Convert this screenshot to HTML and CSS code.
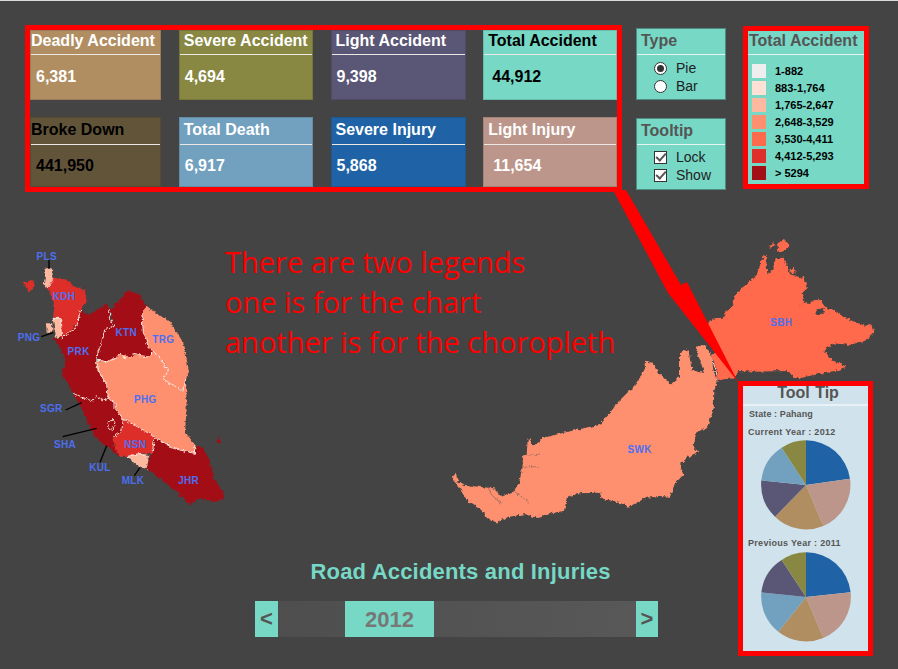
FILE: index.html
```html
<!DOCTYPE html>
<html lang="en">
<head>
<meta charset="utf-8">
<title>Road Accidents and Injuries</title>
<link rel="stylesheet" href="styles.css">
</head>
<body>
<main class="page">
  <svg class="map" viewBox="0 0 898 669" aria-label="Choropleth of Malaysia">
    <defs>
      <filter id="rough" filterUnits="userSpaceOnUse" x="0" y="0" width="1400" height="900">
        <feTurbulence type="fractalNoise" baseFrequency="0.09" numOctaves="3" seed="4" result="noise"/>
        <feDisplacementMap in="SourceGraphic" in2="noise" scale="14" xChannelSelector="R" yChannelSelector="G"/>
      </filter>
    </defs>
    <g transform="translate(0 235) scale(.33333)">
      <g filter="url(#rough)">
        <polygon class="c2" points="137,100 155,100 162,135 140,160 131,150 135,125"/>
        <polygon class="c5" points="68,140 85,142 100,135 104,155 85,170 78,155"/>
        <polygon class="c5" points="162,128 205,135 225,155 255,165 260,200 245,222 235,262 210,290 185,312 178,305 180,250 160,248 162,205 148,170 140,160"/>
        <polygon class="c2" points="158,250 182,250 184,305 168,308"/>
        <polygon class="c2" points="138,265 157,265 157,290 140,290"/>
        <polygon class="c6" points="160,308 185,312 210,290 235,262 242,225 265,240 320,205 330,225 328,245 342,275 315,280 305,325 288,370 290,400 320,450 325,490 300,482 285,495 255,490 220,475 195,430 185,425 195,380 185,345 165,315"/>
        <polygon class="c6" points="330,225 365,190 385,165 420,180 438,215 425,235 430,290 445,335 460,350 445,365 415,358 390,365 360,358 345,372 320,380 300,375 288,370 305,325 315,280 342,275"/>
        <polygon class="c3" points="425,235 438,215 470,235 510,262 545,315 560,370 567,410 558,430 552,470 520,450 490,435 505,405 485,370 460,350 445,335 430,290"/>
        <polygon class="c3" points="290,378 320,380 345,372 360,358 390,365 415,358 445,365 460,350 485,370 505,405 490,435 520,450 548,470 558,430 560,520 555,590 585,630 583,655 520,640 465,608 430,585 370,552 345,520 345,505 325,490 320,450 290,400"/>
        <polygon class="c6" points="220,475 255,490 285,495 300,482 325,490 345,505 345,520 370,552 365,590 340,605 345,640 360,665 330,640 300,620 275,590 250,530"/>
        <polygon class="c5" points="370,552 430,585 465,608 455,655 420,655 380,665 360,665 345,640 340,605 365,590"/>
        <polygon class="c2" points="380,665 420,655 448,660 440,703 410,690"/>
        <polygon class="c6" points="465,608 520,640 583,655 590,630 610,640 630,680 640,730 670,770 670,795 640,800 600,790 570,808 530,770 490,740 440,700 455,655"/>
        <polygon class="c6" points="650,620 655,600 663,620 655,625"/>
        <polyline class="edge" points="140,160 162,135"/>
        <polyline class="edge" points="185,312 210,290 222,285 235,262 237,240 242,225"/>
        <polyline class="edge" points="330,225 328,245 342,275 315,280 308,310 305,325 295,350 288,370"/>
        <polyline class="edge" points="288,375 320,380 345,372 350,362 360,358 375,368 390,365 400,355 415,358 430,368 445,365 460,350"/>
        <polyline class="edge" points="425,235 430,290 445,335 460,350 485,370 490,385 505,405 490,435 520,450 548,470 558,430"/>
        <polyline class="edge" points="290,378 295,405 320,450 325,490"/>
        <polyline class="edge" points="220,475 240,485 255,490 280,498 288,482 300,490 312,497 325,490 345,505 345,520 370,552 430,585 465,608 520,640 583,655 585,630"/>
        <polyline class="edge" points="370,552 365,590 340,605"/>
        <polyline class="edge" points="465,608 455,655"/>
        <polyline class="edge" points="158,250 182,250 184,305"/>
        <polyline class="edge" points="380,665 420,655 445,670"/>
        <polygon class="edge" points="325,560 340,555 345,570 335,585 323,575"/>
      </g>
      <polyline class="lead" points="147,75 147,102"/>
      <polyline class="lead" points="124,305 160,293"/>
      <polyline class="lead" points="197,525 245,503"/>
      <polyline class="lead" points="188,605 290,580"/>
      <polyline class="lead" points="300,682 320,632"/>
      <polyline class="lead" points="403,722 420,698"/>
      <text class="label" x="140" y="76">PLS</text>
      <text class="label" x="192" y="196">KDH</text>
      <text class="label" x="87" y="317">PNG</text>
      <text class="label" x="379" y="304">KTN</text>
      <text class="label" x="490" y="325">TRG</text>
      <text class="label" x="236" y="361">PRK</text>
      <text class="label" x="436" y="505">PHG</text>
      <text class="label" x="154" y="532">SGR</text>
      <text class="label" x="195" y="640">SHA</text>
      <text class="label" x="406" y="640">NSN</text>
      <text class="label" x="300" y="707">KUL</text>
      <text class="label" x="399" y="748">MLK</text>
      <text class="label" x="566" y="748">JHR</text>
    </g>
    <g transform="translate(445 340) scale(.33333)">
      <g filter="url(#rough)">
        <polygon class="c3" points="20,410 32,398 38,425 60,435 100,440 145,445 170,470 205,455 222,430 232,385 235,345 245,345 248,298 258,300 262,322 290,295 380,272 465,255 490,225 520,185 570,135 598,90 600,65 625,68 640,100 680,135 705,105 705,40 730,28 740,90 778,100 765,60 752,20 780,15 800,45 805,90 818,125 808,150 806,210 785,265 755,275 745,320 760,335 730,350 705,372 715,405 690,430 675,470 640,468 600,475 552,500 520,488 470,475 465,458 395,460 365,475 358,512 320,520 280,535 240,522 190,530 155,548 130,535 100,505 70,485 45,445"/>
        <polyline class="inlet" points="248,345 262,345 285,342"/>
        <polyline class="inlet" points="232,380 280,380"/>
        <polyline class="inlet" points="208,458 245,480 250,488"/>
        <polyline class="inlet" points="125,435 140,465 170,490"/>
        <polyline class="edge" points="805,45 803,65 818,100 815,122"/>
      </g>
      <text class="label" x="584" y="340">SWK</text>
    </g>
    <g transform="translate(690 235) scale(.33333)">
      <g filter="url(#rough)">
        <polygon class="c4" points="55,262 75,250 100,248 110,228 130,208 135,180 160,155 200,120 208,95 222,60 228,65 232,118 245,108 258,70 280,68 292,95 300,118 340,130 352,160 335,175 345,205 325,212 365,200 385,188 405,215 440,230 480,255 525,272 545,270 550,295 530,315 480,330 430,325 403,345 425,375 470,395 435,408 370,420 330,430 310,425 295,408 200,410 145,408 135,430 80,435 78,400 65,365 80,345 60,300"/>
        <polygon class="c4" points="238,35 250,22 255,30 240,38"/>
        <polygon class="c4" points="262,25 285,15 298,30 285,45 265,50"/>
        <polygon class="c4" points="298,105 312,98 320,110 305,115"/>
        <polygon class="gap" points="375,225 400,218 405,232 380,238"/>
      </g>
      <text class="label" x="274" y="272">SBH</text>
    </g>
    <polygon class="arrow" points="613,190 626,190 681,285 687,282 738,382 668,293"/>
  </svg>

  <section class="top">
    <div class="stats">
      <article class="tile tile-tan">
        <h2 class="tile-title pad-1">Deadly Accident</h2>
        <p class="tile-value">6,381</p>
      </article>
      <article class="tile tile-olive">
        <h2 class="tile-title pad-4">Severe Accident</h2>
        <p class="tile-value">4,694</p>
      </article>
      <article class="tile tile-purple">
        <h2 class="tile-title pad-4">Light Accident</h2>
        <p class="tile-value">9,398</p>
      </article>
      <article class="tile tile-teal">
        <h2 class="tile-title pad-4">Total Accident</h2>
        <p class="tile-value">44,912</p>
      </article>
      <article class="tile tile-low tile-brown">
        <h2 class="tile-title pad-1">Broke Down</h2>
        <p class="tile-value">441,950</p>
      </article>
      <article class="tile tile-low tile-steel">
        <h2 class="tile-title pad-4">Total Death</h2>
        <p class="tile-value">6,917</p>
      </article>
      <article class="tile tile-low tile-blue">
        <h2 class="tile-title pad-4">Severe Injury</h2>
        <p class="tile-value">5,868</p>
      </article>
      <article class="tile tile-low tile-rose">
        <h2 class="tile-title pad-4">Light Injury</h2>
        <p class="tile-value">11,654</p>
      </article>
    </div>

    <div class="controls">
      <form class="panel">
        <h2 class="panel-title">Type</h2>
        <div class="panel-body">
          <label class="option"><input class="radio" type="radio" name="type" checked>Pie</label>
          <label class="option"><input class="radio" type="radio" name="type">Bar</label>
        </div>
      </form>
      <form class="panel panel-low">
        <h2 class="panel-title">Tooltip</h2>
        <div class="panel-body">
          <label class="option"><input class="check" type="checkbox" checked>Lock</label>
          <label class="option"><input class="check" type="checkbox" checked>Show</label>
        </div>
      </form>
    </div>

    <aside class="legend">
      <h2 class="legend-title">Total Accident</h2>
      <ul class="legend-list">
        <li class="legend-row"><span class="swatch s0"></span>1-882</li>
        <li class="legend-row"><span class="swatch s1"></span>883-1,764</li>
        <li class="legend-row"><span class="swatch s2"></span>1,765-2,647</li>
        <li class="legend-row"><span class="swatch s3"></span>2,648-3,529</li>
        <li class="legend-row"><span class="swatch s4"></span>3,530-4,411</li>
        <li class="legend-row"><span class="swatch s5"></span>4,412-5,293</li>
        <li class="legend-row"><span class="swatch s6"></span>&gt; 5294</li>
      </ul>
    </aside>
  </section>

  <p class="note">There are two legends<br>one is for the chart<br>another is for the choropleth</p>

  <aside class="tip">
    <h2 class="tip-title">Tool Tip</h2>
    <p class="tip-state">State : Pahang</p>
    <p class="tip-year">Current Year : 2012</p>
    <svg class="pie" viewBox="-135 -135 270 270">
      <path class="p-blue" d="M0 0V-134A134 134 0 0 1 132 -19Z"/>
      <path class="p-rose" d="M0 0L132 -19A134 134 0 0 1 52 123Z"/>
      <path class="p-tan" d="M0 0L52 123A134 134 0 0 1 -93 95Z"/>
      <path class="p-purple" d="M0 0L-93 95A134 134 0 0 1 -134 -14Z"/>
      <path class="p-steel" d="M0 0L-134 -14A134 134 0 0 1 -73 -112Z"/>
      <path class="p-olive" d="M0 0L-73 -112A134 134 0 0 1 0 -134Z"/>
    </svg>
    <p class="tip-year tip-prev">Previous Year : 2011</p>
    <svg class="pie" viewBox="-135 -135 270 270">
      <path class="p-blue" d="M0 0V-134A134 134 0 0 1 134 -14Z"/>
      <path class="p-rose" d="M0 0L134 -14A134 134 0 0 1 52 123Z"/>
      <path class="p-tan" d="M0 0L52 123A134 134 0 0 1 -83 104Z"/>
      <path class="p-steel" d="M0 0L-83 104A134 134 0 0 1 -134 -14Z"/>
      <path class="p-purple" d="M0 0L-134 -14A134 134 0 0 1 -73 -111Z"/>
      <path class="p-olive" d="M0 0L-73 -111A134 134 0 0 1 0 -134Z"/>
    </svg>
  </aside>

  <footer class="footer">
    <h1 class="heading">Road Accidents and Injuries</h1>
    <div class="slider">
      <button class="step" type="button">&lt;</button>
      <div class="track"><span class="thumb">2012</span></div>
      <button class="step step-next" type="button">&gt;</button>
    </div>
  </footer>
</main>
</body>
</html>
```
FILE: styles.css
```css
* { box-sizing: border-box; }
html, body { margin: 0; padding: 0; }
body { font-family: "Liberation Sans", Arial, sans-serif; background: #444; }
h1, h2, p, ul { margin: 0; padding: 0; }

.page {
  position: relative;
  width: 898px;
  height: 669px;
  overflow: hidden;
  background: #444;
  border-top: 1px solid #ddd;
  display: flex;
  flex-direction: column;
}

/* free canvas: the geography itself */
.map { position: absolute; left: 0; top: -1px; width: 898px; height: 669px; }
.c2 { fill: #fdb8a0; }
.c3 { fill: #fe9070; }
.c4 { fill: #fe6a4c; }
.c5 { fill: #de2f2a; }
.c6 { fill: #a30f17; }
.edge { fill: none; stroke: #ffe6dc; stroke-width: 3; }
.inlet { fill: none; stroke: #6b5a52; stroke-width: 1.5; }
.gap { fill: #444; }
.lead { fill: none; stroke: #000; stroke-width: 4; }
.label {
  fill: #4c6ff0;
  font-size: 30px;
  font-weight: 700;
  text-anchor: middle;
  letter-spacing: 1px;
}
.arrow { fill: #f00; }

/* top row */
.top {
  position: relative;
  display: flex;
  align-items: flex-start;
  padding: 24px 0 0 25px;
}
.stats {
  width: 597px;
  height: 167px;
  border: 5px solid #f00;
  display: grid;
  grid-template-columns: 131px 134px 135px 134px;
  grid-template-rows: 70px 70px;
  column-gap: 17.75px;
  row-gap: 17px;
}
.tile { border: 1px solid rgba(0, 0, 0, .12); color: #fff; font-weight: 700; }
.tile-title {
  height: 24px;
  border-bottom: 1px solid #ece8e4;
  font-size: 16px;
  line-height: 19px;
  white-space: nowrap;
}
.tile-low .tile-title { height: 27px; line-height: 24px; }
.tile-value { font-size: 16px; line-height: 20px; padding: 12px 0 0 5px; }
.tile-low .tile-value { padding-top: 11px; }
.pad-1 { padding-left: 0; }
.pad-4 { padding-left: 4px; }
.tile-tan { background: #b08e62; }
.tile-olive { background: #888842; }
.tile-purple { background: #5a5675; }
.tile-teal { background: #76d8c5; color: #000; }
.tile-brown { background: #625439; color: #000; }
.tile-steel { background: #72a0bf; }
.tile-blue { background: #1f63a6; }
.tile-rose { background: #bc968a; }
.tile-rose .tile-value { padding-left: 9px; }
.tile-teal .tile-value { padding-left: 8px; }

.controls {
  display: flex;
  flex-direction: column;
  gap: 18px;
  width: 90px;
  margin: 3px 0 0 14px;
}
.panel {
  height: 72px;
  background: #76d8c5;
  border: 1px solid #4f8d84;
}
.panel-title {
  height: 26px;
  padding-left: 4px;
  border-bottom: 1px solid #e6f4f0;
  color: #555;
  font-size: 16px;
  line-height: 23px;
}
.panel-body { padding: 4px 0 0 17px; }
.panel-low .panel-body { padding-top: 3px; }
.option {
  display: flex;
  align-items: center;
  gap: 9px;
  height: 18px;
  font-size: 14px;
  color: #222;
}
.radio, .check {
  appearance: none;
  margin: 0;
  width: 13px;
  height: 13px;
  background: #fff;
  border: 1px solid #333;
  display: grid;
  place-items: center;
  flex: none;
}
.radio { border-radius: 50%; }
.radio:checked::before {
  content: "";
  width: 7px;
  height: 7px;
  border-radius: 50%;
  background: #333;
}
.check:checked::before {
  content: "";
  width: 4px;
  height: 8px;
  margin-top: -2px;
  border: solid #555;
  border-width: 0 2px 2px 0;
  transform: rotate(42deg);
}

.legend {
  width: 126px;
  height: 163px;
  margin: 1px 0 0 17px;
  border: 5px solid #f00;
  background: #76d8c5;
}
.legend-title {
  height: 24px;
  padding-left: 1px;
  border-bottom: 1px solid #e6f4f0;
  color: #555;
  font-size: 16px;
  line-height: 19px;
  white-space: nowrap;
}
.legend-list { list-style: none; padding: 7px 0 0 4px; }
.legend-row {
  display: flex;
  align-items: center;
  gap: 9px;
  height: 17px;
  font-size: 11px;
  font-weight: 700;
  color: #000;
}
.swatch { width: 14px; height: 14px; flex: none; }
.s0 { background: #eee; }
.s1 { background: #fee0d4; }
.s2 { background: #fdb8a0; }
.s3 { background: #fe9070; }
.s4 { background: #fe6a4c; }
.s5 { background: #de2f2a; }
.s6 { background: #a30f17; }

/* annotation lying over the map */
.note {
  position: absolute;
  left: 225px;
  top: 241px;
  color: #f00;
  font-family: "Open Sans", sans-serif;
  font-size: 29px;
  line-height: 40px;
  white-space: nowrap;
}

/* floating tooltip */
.tip {
  position: absolute;
  left: 738px;
  top: 380px;
  width: 135px;
  height: 275px;
  border: 5px solid #f00;
  background: #d0e2ec;
  color: #555;
}
.tip-title {
  height: 18px;
  border-bottom: 2px solid #e8f1f6;
  padding-left: 5px;
  font-size: 16px;
  word-spacing: 1px;
  line-height: 14px;
  text-align: center;
  box-sizing: content-box;
}
.tip-state, .tip-year { font-size: 9px; font-weight: 700; letter-spacing: .3px; white-space: nowrap; }
.tip-state { padding: 2px 0 0 6px; line-height: 12px; letter-spacing: .1px; }
.tip-year { padding: 6px 0 0 5px; line-height: 12px; }
.pie { display: block; width: 90px; height: 90px; margin: 2px 0 0 18px; }
.tip-prev { padding-top: 0; margin-top: 7px; }
.tip-prev + .pie { margin-top: 3px; }
.p-blue { fill: #1f63a6; }
.p-rose { fill: #bc968a; }
.p-tan { fill: #b08e62; }
.p-purple { fill: #5a5675; }
.p-steel { fill: #72a0bf; }
.p-olive { fill: #888842; }

/* footer */
.footer {
  position: relative;
  margin: 367px 0 0 255px;
  width: 403px;
}
.heading {
  color: #76d8c5;
  font-size: 22px;
  line-height: 26px;
  letter-spacing: .19px;
  text-align: center;
  white-space: nowrap;
  margin-left: 8px;
}
.slider { display: flex; height: 36px; margin-top: 16px; }
.step {
  width: 23px;
  padding: 0;
  border: 0;
  background: #76d8c5;
  color: #555;
  font: 700 22px "Liberation Sans", Arial, sans-serif;
}
.step-next { width: 22px; }
.track {
  flex: 1;
  padding-left: 67px;
  background: linear-gradient(90deg, #4e4e4e, #585858);
}
.thumb {
  display: block;
  width: 89px;
  height: 36px;
  background: #76d8c5;
  color: #777;
  font-size: 22px;
  font-weight: 700;
  line-height: 38px;
  text-align: center;
}
```
